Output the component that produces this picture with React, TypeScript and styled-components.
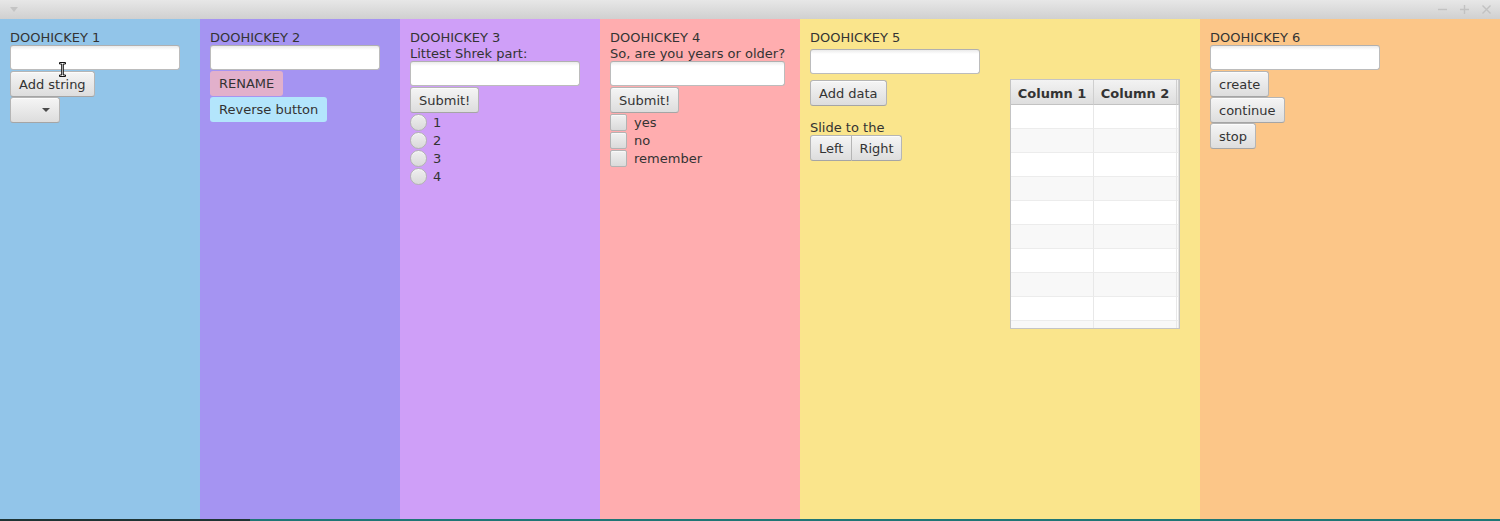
import React from "react";
import styled, { createGlobalStyle } from "styled-components";

const GlobalStyle = createGlobalStyle`
  html, body { margin: 0; padding: 0; }
  body {
    font-family: "DejaVu Sans", "Liberation Sans", sans-serif;
    font-size: 13px;
    color: #333;
    overflow: hidden;
  }
  * { box-sizing: border-box; }
`;

const Window = styled.div`
  width: 1500px;
  height: 521px;
  display: flex;
  flex-direction: column;
`;

const TitleBar = styled.div`
  flex: none;
  height: 19px;
  display: flex;
  align-items: center;
  justify-content: space-between;
  padding: 0 9px 0 10px;
  background: linear-gradient(#e7e7e7, #d0d0d0);
`;

const WinControls = styled.div`
  display: flex;
  align-items: center;
  gap: 13px;
`;

const Panels = styled.div`
  flex: none;
  height: 500px;
  display: flex;
`;

const Panel = styled.div<{ $bg: string; $w: number }>`
  position: relative;
  width: ${(p) => p.$w}px;
  flex: none;
  background: ${(p) => p.$bg};
  padding: 10px;
  display: flex;
  flex-direction: column;
  align-items: flex-start;
`;

const Label = styled.div<{ $mt?: number }>`
  margin-top: ${(p) => p.$mt ?? 0}px;
  padding-top: 1px;
  line-height: 15px;
  white-space: nowrap;
`;

const TextField = styled.input<{ $w?: number; $mt?: number }>`
  width: ${(p) => p.$w ?? 170}px;
  height: 25px;
  margin: ${(p) => p.$mt ?? 0}px 0 1px 0;
  border: 1px solid #bcbcbc;
  border-top-color: #b0b0b0;
  border-radius: 3px;
  background: linear-gradient(#ebebeb 0, #ffffff 4px);
  font: inherit;
  outline: none;
`;

const Button = styled.button<{ $mt?: number }>`
  height: 26px;
  margin: ${(p) => p.$mt ?? 0}px 0 0 0;
  padding: 1px 8px 0;
  border: 1px solid #b5b5b5;
  border-bottom-color: #a5a5a5;
  border-radius: 3px;
  background: linear-gradient(#f5f5f5, #dddddd);
  box-shadow: inset 0 1px 0 rgba(255, 255, 255, 0.7);
  font: inherit;
  color: #333;
  white-space: nowrap;
  line-height: 23px;
`;

const FlatButton = styled.button<{ $bg: string }>`
  height: 25px;
  margin: 0 0 1px 0;
  padding: 1px 9px 0;
  border: none;
  border-radius: 3px;
  background: ${(p) => p.$bg};
  font: inherit;
  color: #333;
  white-space: nowrap;
  line-height: 24px;
`;

const Combo = styled.div`
  width: 50px;
  height: 26px;
  border: 1px solid #b5b5b5;
  border-bottom-color: #a5a5a5;
  border-radius: 3px;
  background: linear-gradient(#f5f5f5, #dddddd);
  box-shadow: inset 0 1px 0 rgba(255, 255, 255, 0.7);
  display: flex;
  align-items: center;
  justify-content: flex-end;
  padding-right: 9px;
`;

const ComboArrow = styled.div`
  width: 0;
  height: 0;
  border-left: 4px solid transparent;
  border-right: 4px solid transparent;
  border-top: 4px solid #4a4a4a;
`;

const OptionRow = styled.div`
  height: 18px;
  display: flex;
  align-items: center;
  gap: 6px;
`;

const OptionText = styled.span`
  padding-top: 2px;
  line-height: 16px;
`;

const RadioDot = styled.div`
  width: 17px;
  height: 17px;
  border-radius: 50%;
  border: 1px solid #b3b3b3;
  background: linear-gradient(#efefef, #d9d9d9);
  box-shadow: inset 0 1px 0 rgba(255, 255, 255, 0.6);
`;

const CheckBox = styled.div`
  width: 17px;
  height: 17px;
  margin-right: 1px;
  border-radius: 2px;
  border: 1px solid #b3b3b3;
  background: linear-gradient(#f1f1f1, #dadada);
  box-shadow: inset 0 1px 0 rgba(255, 255, 255, 0.6);
`;

const Split = styled.div`
  display: flex;
  align-items: flex-start;
  gap: 30px;
`;

const Column = styled.div`
  display: flex;
  flex-direction: column;
  align-items: flex-start;
`;

const Segmented = styled.div`
  display: flex;
`;

const SegButton = styled(Button)<{ $pos: "first" | "last" }>`
  border-radius: ${(p) => (p.$pos === "first" ? "3px 0 0 3px" : "0 3px 3px 0")};
  ${(p) => (p.$pos === "last" ? "border-left: none;" : "")}
  padding: 1px ${(p) => (p.$pos === "first" ? 8 : 7)}px 0;
`;

const Table = styled.div`
  margin-top: 34px;
  width: 170px;
  height: 250px;
  border: 1px solid #c4c4c4;
  background: #ffffff;
  overflow: hidden;
  display: grid;
  grid-template-columns: 83px 83px 1fr;
  grid-auto-rows: 24px;
  grid-template-rows: 25px;
`;

const HeaderCell = styled.div`
  padding-top: 2px;
  border-right: 1px solid #cfcfcf;
  border-bottom: 1px solid #c2c2c2;
  background: linear-gradient(#f3f3f3, #dedede);
  font-weight: bold;
  display: flex;
  align-items: center;
  justify-content: center;
  white-space: nowrap;
`;

const Cell = styled.div<{ $alt: boolean }>`
  border-right: 1px solid #e8e8e8;
  border-bottom: 1px solid #ececec;
  background: ${(p) => (p.$alt ? "#f8f8f8" : "#ffffff")};
`;

const Cursor = styled.svg`
  position: absolute;
  left: 59px;
  top: 43px;
`;

const BottomStrip = styled.div`
  flex: none;
  height: 2px;
  display: flex;
`;

const StripPart = styled.div<{ $bg: string; $w?: number }>`
  background: ${(p) => p.$bg};
  ${(p) => (p.$w ? `width: ${p.$w}px;` : "flex: 1;")}
`;

const rows = Array.from({ length: 10 }, (_, i) => i);

export default function App() {
  return (
    <>
      <GlobalStyle />
      <Window>
        <TitleBar>
          <svg width="8" height="5" viewBox="0 0 8 5">
            <path d="M0 0 L8 0 L4 5 Z" fill="#c4c4c4" />
          </svg>
          <WinControls>
            <svg width="9" height="9" viewBox="0 0 9 9">
              <path d="M0 4.5 H9" stroke="#c2c2c2" strokeWidth="1.4" />
            </svg>
            <svg width="9" height="9" viewBox="0 0 9 9">
              <path d="M0 4.5 H9 M4.5 0 V9" stroke="#c2c2c2" strokeWidth="1.4" />
            </svg>
            <svg width="9" height="9" viewBox="0 0 9 9">
              <path d="M0.5 0.5 L8.5 8.5 M8.5 0.5 L0.5 8.5" stroke="#c2c2c2" strokeWidth="1.4" />
            </svg>
          </WinControls>
        </TitleBar>
        <Panels>
          <Panel $bg="#92c5e9" $w={200}>
            <Label>DOOHICKEY 1</Label>
            <TextField />
            <Button>Add string</Button>
            <Combo>
              <ComboArrow />
            </Combo>
            <Cursor width="7" height="15" viewBox="0 0 7 15">
              <path
                d="M0.5 0.5 H6.5 V2 H4.3 V13 H6.5 V14.5 H0.5 V13 H2.7 V2 H0.5 Z"
                fill="#ffffff"
                stroke="#111"
                strokeWidth="1"
              />
            </Cursor>
          </Panel>
          <Panel $bg="#a594f2" $w={200}>
            <Label>DOOHICKEY 2</Label>
            <TextField />
            <FlatButton $bg="#e2b0cb">RENAME</FlatButton>
            <FlatButton $bg="#b3e5fc">Reverse button</FlatButton>
          </Panel>
          <Panel $bg="#cf9ff8" $w={200}>
            <Label>DOOHICKEY 3</Label>
            <Label>Littest Shrek part:</Label>
            <TextField />
            <Button>Submit!</Button>
            {["1", "2", "3", "4"].map((n) => (
              <OptionRow key={n}>
                <RadioDot />
                <OptionText>{n}</OptionText>
              </OptionRow>
            ))}
          </Panel>
          <Panel $bg="#ffadaf" $w={200}>
            <Label>DOOHICKEY 4</Label>
            <Label>So, are you years or older?</Label>
            <TextField $w={175} />
            <Button>Submit!</Button>
            {["yes", "no", "remember"].map((n) => (
              <OptionRow key={n}>
                <CheckBox />
                <OptionText>{n}</OptionText>
              </OptionRow>
            ))}
          </Panel>
          <Panel $bg="#fae58c" $w={400}>
            <Label>DOOHICKEY 5</Label>
            <Split>
              <Column>
                <TextField $mt={4} />
                <Button $mt={5}>Add data</Button>
                <Label $mt={13}>Slide to the</Label>
                <Segmented>
                  <SegButton $pos="first">Left</SegButton>
                  <SegButton $pos="last">Right</SegButton>
                </Segmented>
              </Column>
              <Table>
                <HeaderCell>Column 1</HeaderCell>
                <HeaderCell>Column 2</HeaderCell>
                <HeaderCell />
                {rows.map((r) => (
                  <React.Fragment key={r}>
                    <Cell $alt={r % 2 === 1} />
                    <Cell $alt={r % 2 === 1} />
                    <Cell $alt={r % 2 === 1} />
                  </React.Fragment>
                ))}
              </Table>
            </Split>
          </Panel>
          <Panel $bg="#fcc688" $w={300}>
            <Label>DOOHICKEY 6</Label>
            <TextField />
            <Button>create</Button>
            <Button>continue</Button>
            <Button>stop</Button>
          </Panel>
        </Panels>
        <BottomStrip>
          <StripPart $bg="#1f3434" $w={250} />
          <StripPart $bg="#1f7676" />
        </BottomStrip>
      </Window>
    </>
  );
}
